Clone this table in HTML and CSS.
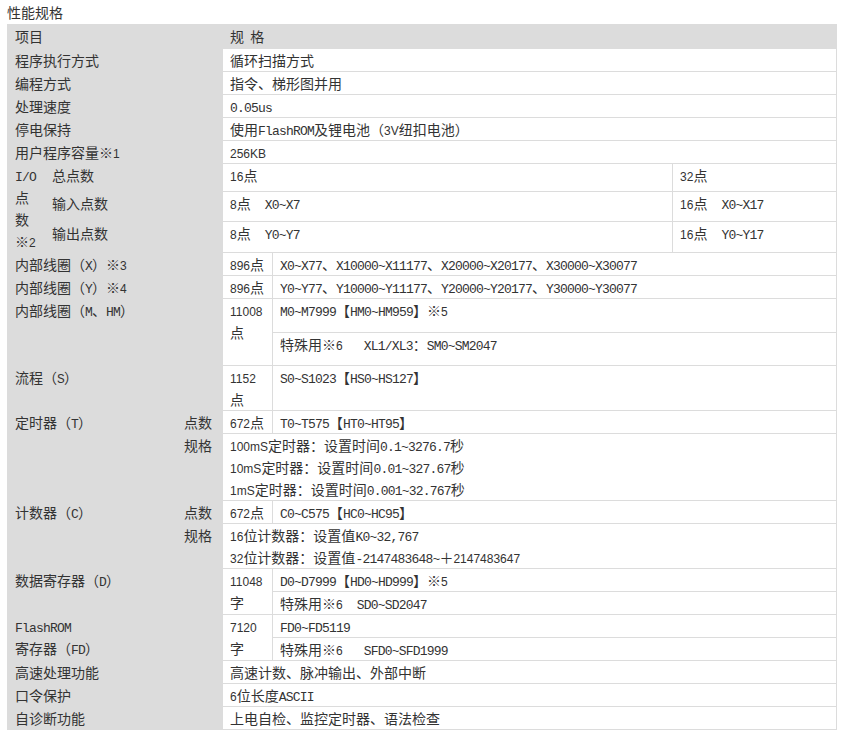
FILE: index.html
```html
<!DOCTYPE html>
<html lang="zh-CN">
<head>
<meta charset="utf-8">
<title>性能规格</title>
<link rel="stylesheet" href="styles.css">
</head>
<body>
<div class="page">
  <div class="title">性能规格</div>
  <table class="spec">
    <colgroup>
      <col class="c1"><col class="c2"><col class="c3"><col class="c4"><col class="c5"><col class="c6">
    </colgroup>
    <tr class="hdr">
      <td class="lbl" colspan="3">项目</td>
      <td class="lbl hd" colspan="3">规 格</td>
    </tr>
    <tr>
      <td class="lbl" colspan="3">程序执行方式</td>
      <td colspan="3">循环扫描方式</td>
    </tr>
    <tr>
      <td class="lbl" colspan="3">编程方式</td>
      <td colspan="3">指令、梯形图并用</td>
    </tr>
    <tr>
      <td class="lbl" colspan="3">处理速度</td>
      <td colspan="3"><span class="m">0.05us</span></td>
    </tr>
    <tr>
      <td class="lbl" colspan="3">停电保持</td>
      <td colspan="3">使用<span class="m">FlashROM</span>及锂电池（<span class="a">3V</span>纽扣电池）</td>
    </tr>
    <tr>
      <td class="lbl" colspan="3">用户程序容量※<span class="a">1</span></td>
      <td colspan="3"><span class="a">256KB</span></td>
    </tr>
    <tr class="io1">
      <td class="lbl" rowspan="3"><span class="m">I/O</span><br>点<br>数<br>※<span class="a">2</span></td>
      <td class="lbl" colspan="2">总点数</td>
      <td colspan="2"><span class="a">16</span>点</td>
      <td><span class="a">32</span>点</td>
    </tr>
    <tr class="io2">
      <td class="lbl" colspan="2">输入点数</td>
      <td colspan="2"><span class="a">8</span>点<span class="m">&nbsp;&nbsp;X0~X7</span></td>
      <td><span class="a">16</span>点<span class="m">&nbsp;&nbsp;X0~X17</span></td>
    </tr>
    <tr class="io3">
      <td class="lbl" colspan="2">输出点数</td>
      <td colspan="2"><span class="a">8</span>点<span class="m">&nbsp;&nbsp;Y0~Y7</span></td>
      <td><span class="a">16</span>点<span class="m">&nbsp;&nbsp;Y0~Y17</span></td>
    </tr>
    <tr>
      <td class="lbl" colspan="3">内部线圈（<span class="m">X</span>）※<span class="a">3</span></td>
      <td><span class="a">896</span>点</td>
      <td colspan="2"><span class="m">X0~X77</span>、<span class="m">X10000~X11177</span>、<span class="m">X20000~X20177</span>、<span class="m">X30000~X30077</span></td>
    </tr>
    <tr>
      <td class="lbl" colspan="3">内部线圈（<span class="m">Y</span>）※<span class="a">4</span></td>
      <td><span class="a">896</span>点</td>
      <td colspan="2"><span class="m">Y0~Y77</span>、<span class="m">Y10000~Y11177</span>、<span class="m">Y20000~Y20177</span>、<span class="m">Y30000~Y30077</span></td>
    </tr>
    <tr class="mh1">
      <td class="lbl" colspan="3" rowspan="2">内部线圈（<span class="m">M</span>、<span class="m">HM</span>）</td>
      <td rowspan="2"><span class="a">11008</span><br>点</td>
      <td colspan="2"><span class="m">M0~M7999</span>【<span class="m">HM0~HM959</span>】※<span class="a">5</span></td>
    </tr>
    <tr class="mh2">
      <td colspan="2">特殊用※<span class="a">6</span><span class="m">&nbsp;&nbsp;&nbsp;XL1/XL3</span>：<span class="m">SM0~SM2047</span></td>
    </tr>
    <tr class="flow">
      <td class="lbl" colspan="3">流程（<span class="m">S</span>）</td>
      <td><span class="a">1152</span><br>点</td>
      <td colspan="2"><span class="m">S0~S1023</span>【<span class="m">HS0~HS127</span>】</td>
    </tr>
    <tr>
      <td class="lbl" colspan="2" rowspan="2">定时器（<span class="m">T</span>）</td>
      <td class="lbl">点数</td>
      <td><span class="a">672</span>点</td>
      <td colspan="2"><span class="m">T0~T575</span>【<span class="m">HT0~HT95</span>】</td>
    </tr>
    <tr>
      <td class="lbl">规格</td>
      <td colspan="3"><span class="a">100mS</span>定时器：设置时间<span class="m">0.1~3276.7</span>秒<br><span class="a">10mS</span>定时器：设置时间<span class="m">0.01~327.67</span>秒<br><span class="a">1mS</span>定时器：设置时间<span class="m">0.001~32.767</span>秒</td>
    </tr>
    <tr>
      <td class="lbl" colspan="2" rowspan="2">计数器（<span class="m">C</span>）</td>
      <td class="lbl">点数</td>
      <td><span class="a">672</span>点</td>
      <td colspan="2"><span class="m">C0~C575</span>【<span class="m">HC0~HC95</span>】</td>
    </tr>
    <tr>
      <td class="lbl">规格</td>
      <td colspan="3"><span class="a">16</span>位计数器：设置值<span class="m">K0~32,767</span><br><span class="a">32</span>位计数器：设置值<span class="m">-2147483648~</span>＋<span class="a">2147483647</span></td>
    </tr>
    <tr>
      <td class="lbl" colspan="3" rowspan="2">数据寄存器（<span class="m">D</span>）</td>
      <td rowspan="2"><span class="a">11048</span><br>字</td>
      <td colspan="2"><span class="m">D0~D7999</span>【<span class="m">HD0~HD999</span>】※<span class="a">5</span></td>
    </tr>
    <tr>
      <td colspan="2">特殊用※<span class="a">6</span><span class="m">&nbsp;&nbsp;SD0~SD2047</span></td>
    </tr>
    <tr>
      <td class="lbl" colspan="3" rowspan="2"><span class="m">FlashROM</span><br>寄存器（<span class="m">FD</span>）</td>
      <td rowspan="2"><span class="a">7120</span><br>字</td>
      <td colspan="2"><span class="m">FD0~FD5119</span></td>
    </tr>
    <tr>
      <td colspan="2">特殊用※<span class="a">6</span><span class="m">&nbsp;&nbsp;&nbsp;SFD0~SFD1999</span></td>
    </tr>
    <tr>
      <td class="lbl" colspan="3">高速处理功能</td>
      <td colspan="3">高速计数、脉冲输出、外部中断</td>
    </tr>
    <tr>
      <td class="lbl" colspan="3">口令保护</td>
      <td colspan="3"><span class="a">6</span>位长度<span class="m">ASCII</span></td>
    </tr>
    <tr>
      <td class="lbl" colspan="3">自诊断功能</td>
      <td colspan="3">上电自检、监控定时器、语法检查</td>
    </tr>
  </table>
</div>
</body>
</html>
```

FILE: styles.css
```css
html, body {
  margin: 0;
  padding: 0;
  background: #ffffff;
}

body {
  font-family: "Noto Sans CJK SC", "Liberation Sans", sans-serif;
  font-size: 14px;
  color: #333333;
}

.page {
  padding: 1px 0 0 7px;
}

.title {
  line-height: 22px;
  height: 22px;
  margin-bottom: 1px;
}

.spec {
  border-collapse: collapse;
  table-layout: fixed;
  width: 829px;
}

.c1 { width: 37px; }
.c2 { width: 132px; }
.c3 { width: 46px; }
.c4 { width: 50px; }
.c5 { width: 400px; }
.c6 { width: 164px; }

.spec td {
  border: 1px solid #dcdcdc;
  padding: 0 7px;
  line-height: 22px;
  vertical-align: top;
  background: #ffffff;
  white-space: nowrap;
  overflow: hidden;
}

.spec td.lbl {
  background: #dcdcdc;
}

.hdr td {
  height: 23px;
}

.hd {
  word-spacing: 3px;
}

.io1 td { height: 27px; }
.io2 td { height: 29px; }
.io3 td { height: 30px; }
.mh1 td { height: 33px; }
.mh2 td { height: 32px; }

.m {
  font-family: "Liberation Mono", monospace;
  font-size: 13px;
  letter-spacing: -0.8px;
  line-height: 1;
}

.a {
  font-family: "Liberation Sans", sans-serif;
  font-size: 12px;
  line-height: 1;
}
```
